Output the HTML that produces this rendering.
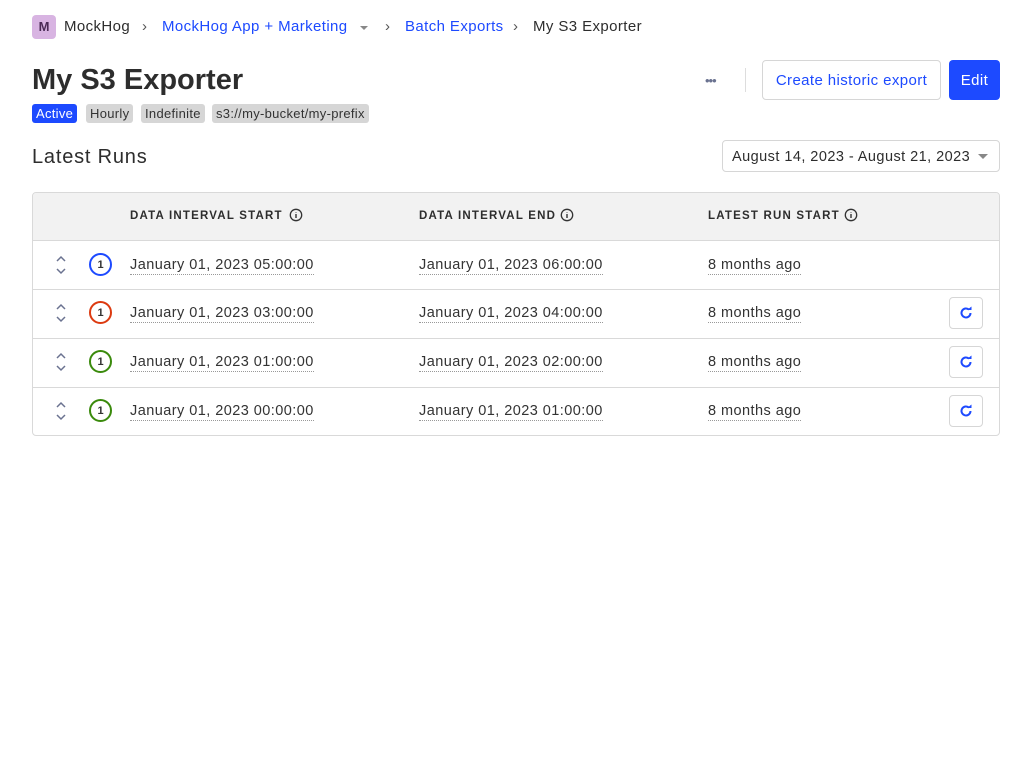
<!DOCTYPE html>
<html><head><meta charset="utf-8"><style>
*{box-sizing:border-box;margin:0;padding:0}
body{width:1032px;height:768px;background:#fff;font-family:"Liberation Sans",sans-serif;color:#2d2d2d;position:relative;overflow:hidden}
.a{position:absolute}
.crumb{top:18px;font-size:15px;line-height:18px;letter-spacing:0.4px}
.blue{color:#1d4aff}
.tag{top:104px;height:19px;border-radius:3px;font-size:13px;line-height:19px;padding:0 4px;background:#d6d6d6;color:#333;letter-spacing:0.3px}
.btn{border-radius:4px;font-size:15px;text-align:center;letter-spacing:0.4px}
.th{top:209px;font-size:11.5px;font-weight:bold;letter-spacing:1.2px;line-height:14px;color:#2d2d2d}
.row{left:0;width:966px;height:49px;border-top:1px solid #d9d9d9}
.cell{font-size:14.5px;line-height:18px;border-bottom:1px dotted #999;color:#333;letter-spacing:0.45px}
.badge{width:23px;height:23px;border-radius:50%;border:2px solid;font-size:11px;font-weight:bold;text-align:center;line-height:20px;color:#333}
.rb{width:34px;height:32px;border:1px solid #d6d6d6;border-radius:4px}
</style></head><body>
<div class="a" style="left:32px;top:15px;width:24px;height:24px;background:#d8b4e2;border-radius:4px;font-weight:bold;font-size:13px;text-align:center;line-height:24px;color:#4a2a55">M</div>
<div class="a crumb" style="left:64px">MockHog</div>
<div class="a crumb" style="left:142px;color:#555">›</div>
<div class="a crumb blue" style="left:162px">MockHog App + Marketing</div>
<div class="a" style="left:360px;top:26px;border:4px solid transparent;border-top:4px solid #888"></div>
<div class="a crumb" style="left:385px;color:#555">›</div>
<div class="a crumb blue" style="left:405px">Batch Exports</div>
<div class="a crumb" style="left:513px;color:#555">›</div>
<div class="a crumb" style="left:533px">My S3 Exporter</div>

<div class="a" style="left:32px;top:62px;font-size:29px;font-weight:bold;line-height:36px">My S3 Exporter</div>
<div class="a tag" style="left:32px;background:#1d4aff;color:#fff">Active</div>
<div class="a tag" style="left:86px">Hourly</div>
<div class="a tag" style="left:141px">Indefinite</div>
<div class="a tag" style="left:212px">s3://my-bucket/my-prefix</div>

<div class="a" style="left:705px;top:73px;font-size:13px;color:#6a7290;letter-spacing:-1px">•••</div>
<div class="a" style="left:745px;top:68px;width:1px;height:24px;background:#ddd"></div>
<div class="a btn blue" style="left:762px;top:60px;width:179px;height:40px;border:1px solid #d6d6d6;line-height:40px">Create historic export</div>
<div class="a btn" style="left:949px;top:60px;width:51px;height:40px;background:#1d4aff;color:#fff;line-height:41px">Edit</div>

<div class="a" style="left:32px;top:145px;font-size:20px;line-height:24px;letter-spacing:0.8px">Latest Runs</div>
<div class="a" style="left:722px;top:140px;width:278px;height:32px;border:1px solid #d6d6d6;border-radius:4px;font-size:14.5px;line-height:32px;padding-left:9px;letter-spacing:0.45px">August 14, 2023 - August 21, 2023</div>
<div class="a" style="left:978px;top:154px;border:5px solid transparent;border-top:5px solid #888"></div>

<div class="a" style="left:32px;top:192px;width:968px;height:244px;border:1px solid #d9d9d9;border-radius:4px;overflow:hidden">
<div class="a" style="left:0;top:0;width:966px;height:48px;background:#f2f2f2"></div>
</div>
<div class="a th" style="left:130px">DATA INTERVAL START</div>
<div class="a th" style="left:419px">DATA INTERVAL END</div>
<div class="a th" style="left:708px">LATEST RUN START</div>
<svg class="a" style="left:289px;top:208px" width="14" height="14"><circle cx="7" cy="7" r="5.7" fill="none" stroke="#333" stroke-width="1.3"/><path d="M7 6v4M7 4v.5" stroke="#333" stroke-width="1.4"/></svg>
<svg class="a" style="left:560px;top:208px" width="14" height="14"><circle cx="7" cy="7" r="5.7" fill="none" stroke="#333" stroke-width="1.3"/><path d="M7 6v4M7 4v.5" stroke="#333" stroke-width="1.4"/></svg>
<svg class="a" style="left:844px;top:208px" width="14" height="14"><circle cx="7" cy="7" r="5.7" fill="none" stroke="#333" stroke-width="1.3"/><path d="M7 6v4M7 4v.5" stroke="#333" stroke-width="1.4"/></svg>

<div class="a row" style="left:33px;top:240px"></div>
<div class="a row" style="left:33px;top:289px"></div>
<div class="a row" style="left:33px;top:338px"></div>
<div class="a row" style="left:33px;top:387px"></div>

<svg class="a" style="left:54px;top:255px" width="14" height="20"><path d="M3 6l4-4 4 4M3 14l4 4 4-4" fill="none" stroke="#6a7290" stroke-width="1.5"/></svg>
<div class="a badge" style="left:89px;top:253px;border-color:#1d4aff">1</div>
<div class="a cell" style="left:130px;top:256px">January 01, 2023 05:00:00</div>
<div class="a cell" style="left:419px;top:256px">January 01, 2023 06:00:00</div>
<div class="a cell" style="left:708px;top:256px">8 months ago</div>

<svg class="a" style="left:54px;top:303px" width="14" height="20"><path d="M3 6l4-4 4 4M3 14l4 4 4-4" fill="none" stroke="#6a7290" stroke-width="1.5"/></svg>
<div class="a badge" style="left:89px;top:301px;border-color:#dc3a10">1</div>
<div class="a cell" style="left:130px;top:304px">January 01, 2023 03:00:00</div>
<div class="a cell" style="left:419px;top:304px">January 01, 2023 04:00:00</div>
<div class="a cell" style="left:708px;top:304px">8 months ago</div>
<div class="a rb" style="left:949px;top:297px"></div>

<svg class="a" style="left:54px;top:352px" width="14" height="20"><path d="M3 6l4-4 4 4M3 14l4 4 4-4" fill="none" stroke="#6a7290" stroke-width="1.5"/></svg>
<div class="a badge" style="left:89px;top:350px;border-color:#3a8a0c">1</div>
<div class="a cell" style="left:130px;top:353px">January 01, 2023 01:00:00</div>
<div class="a cell" style="left:419px;top:353px">January 01, 2023 02:00:00</div>
<div class="a cell" style="left:708px;top:353px">8 months ago</div>
<div class="a rb" style="left:949px;top:346px"></div>

<svg class="a" style="left:54px;top:401px" width="14" height="20"><path d="M3 6l4-4 4 4M3 14l4 4 4-4" fill="none" stroke="#6a7290" stroke-width="1.5"/></svg>
<div class="a badge" style="left:89px;top:399px;border-color:#3a8a0c">1</div>
<div class="a cell" style="left:130px;top:402px">January 01, 2023 00:00:00</div>
<div class="a cell" style="left:419px;top:402px">January 01, 2023 01:00:00</div>
<div class="a cell" style="left:708px;top:402px">8 months ago</div>
<div class="a rb" style="left:949px;top:395px"></div>

<svg class="a" style="left:958px;top:305px" width="16" height="16"><path d="M12.5 8A4.5 4.5 0 1 1 11 4.6" fill="none" stroke="#1d4aff" stroke-width="2"/><path d="M9 3.5h4.5V0z" fill="#1d4aff" transform="translate(0,1.5)"/></svg>
<svg class="a" style="left:958px;top:354px" width="16" height="16"><path d="M12.5 8A4.5 4.5 0 1 1 11 4.6" fill="none" stroke="#1d4aff" stroke-width="2"/><path d="M9 3.5h4.5V0z" fill="#1d4aff" transform="translate(0,1.5)"/></svg>
<svg class="a" style="left:958px;top:403px" width="16" height="16"><path d="M12.5 8A4.5 4.5 0 1 1 11 4.6" fill="none" stroke="#1d4aff" stroke-width="2"/><path d="M9 3.5h4.5V0z" fill="#1d4aff" transform="translate(0,1.5)"/></svg>
</body></html>
